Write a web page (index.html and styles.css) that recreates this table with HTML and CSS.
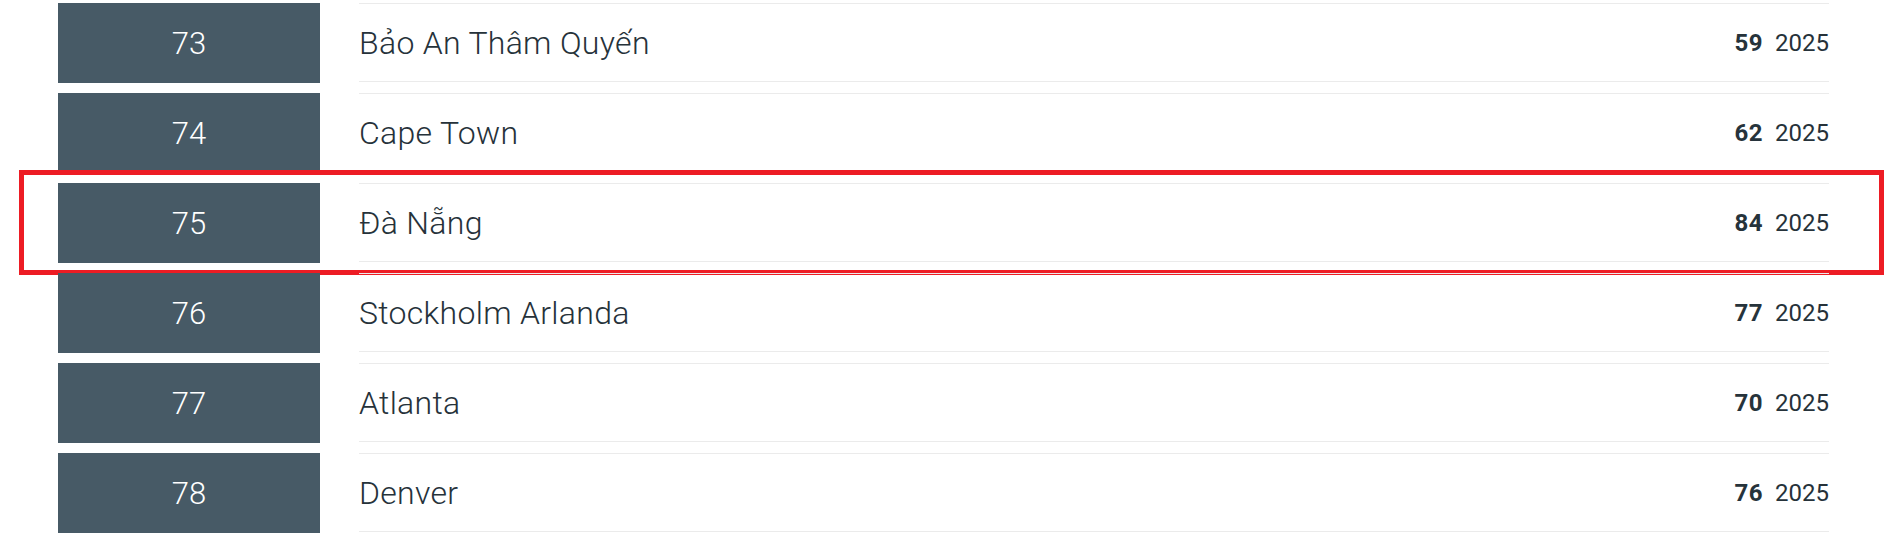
FILE: index.html
```html
<!DOCTYPE html>
<html lang="vi">
<head>
<meta charset="utf-8">
<title>Ranking</title>
<link rel="stylesheet" href="styles.css">
</head>
<body>
<ul class="ranking">
  <li class="row"><div class="rank">73</div><div class="info"><span class="name">Bảo An Thâm Quyến</span><span class="score"><b>59</b> 2025</span></div></li>
  <li class="row"><div class="rank">74</div><div class="info"><span class="name">Cape Town</span><span class="score"><b>62</b> 2025</span></div></li>
  <li class="row highlight"><div class="rank">75</div><div class="info"><span class="name">Đà Nẵng</span><span class="score"><b>84</b> 2025</span></div></li>
  <li class="row"><div class="rank">76</div><div class="info"><span class="name">Stockholm Arlanda</span><span class="score"><b>77</b> 2025</span></div></li>
  <li class="row"><div class="rank">77</div><div class="info"><span class="name">Atlanta</span><span class="score"><b>70</b> 2025</span></div></li>
  <li class="row"><div class="rank">78</div><div class="info"><span class="name">Denver</span><span class="score"><b>76</b> 2025</span></div></li>
</ul>
</body>
</html>
```

FILE: styles.css
```css
html, body {
  margin: 0;
  padding: 0;
  background: #ffffff;
}
body {
  font-family: Roboto, "Liberation Sans", sans-serif;
  color: #26323a;
  overflow: hidden;
}
.ranking {
  list-style: none;
  margin: 0;
  padding: 3px 55px 0 58px;
  display: flex;
  flex-direction: column;
  gap: 10px;
}
.row {
  position: relative;
  display: flex;
  height: 80px;
  gap: 39px;
}
.rank {
  flex: 0 0 262px;
  background: #475a66;
  color: #ffffff;
  font-weight: 300;
  font-size: 31px;
  display: flex;
  align-items: center;
  justify-content: center;
}
.info {
  flex: 1;
  display: flex;
  align-items: center;
  justify-content: space-between;
  border-top: 1px solid #ebebeb;
  border-bottom: 1px solid #ebebeb;
  height: 79px;
  box-sizing: border-box;
}
.name {
  font-size: 32px;
  font-weight: 300;
  letter-spacing: 0.3px;
  color: #26323a;
}
.score {
  font-size: 24px;
  color: #26323a;
}
.score b {
  font-weight: 700;
  color: #26333b;
  letter-spacing: 0.5px;
  margin-right: 6px;
}
.highlight::after {
  content: "";
  position: absolute;
  left: -39px;
  top: -13px;
  width: 1865px;
  height: 105px;
  box-sizing: border-box;
  border: 5px solid #ed1c24;
  pointer-events: none;
}
```
